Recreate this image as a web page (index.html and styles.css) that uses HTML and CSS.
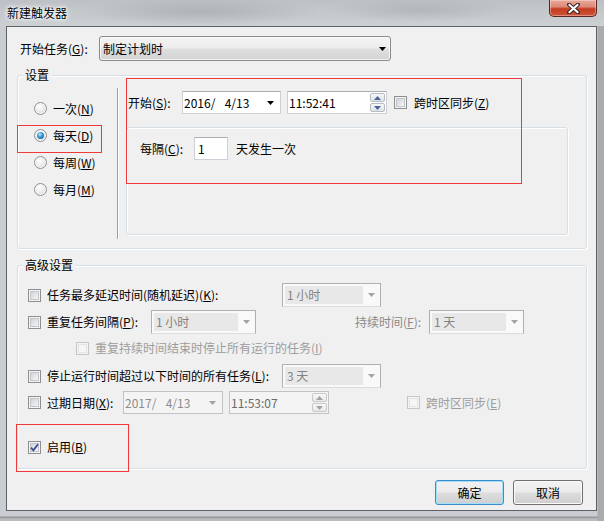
FILE: index.html
```html
<!DOCTYPE html>
<html lang="zh-CN">
<head>
<meta charset="utf-8">
<title>新建触发器</title>
<link rel="stylesheet" href="styles.css">
</head>
<body>
<div class="window">
  <div class="titlebar">
    <span class="title">新建触发器</span>
    <div class="close">
      <svg width="13" height="11" viewBox="0 0 13 11"><path d="M2 1.5 L11 9.5 M11 1.5 L2 9.5" stroke="#3a2a28" stroke-width="4" stroke-linecap="round"/><path d="M2.3 1.8 L10.7 9.2 M10.7 1.8 L2.3 9.2" stroke="#fff" stroke-width="2" stroke-linecap="round"/></svg>
    </div>
  </div>
  <div class="client">
    <div class="row-task">
      <span class="lbl-task">开始任务(<u>G</u>):</span>
      <div class="combo-btn"><span>制定计划时</span><svg class="tri" width="7" height="4" viewBox="0 0 7 4"><path d="M0 0H7L3.5 4Z" fill="#000"/></svg></div>
    </div>

    <div class="group g-settings">
      <span class="group-title">设置</span>
      <div class="settings-body">
        <div class="radios">
          <div class="radio-row"><span class="radio"></span><span>一次(<u>N</u>)</span></div>
          <div class="radio-row"><span class="radio on"></span><span>每天(<u>D</u>)</span></div>
          <div class="radio-row"><span class="radio"></span><span>每周(<u>W</u>)</span></div>
          <div class="radio-row"><span class="radio"></span><span>每月(<u>M</u>)</span></div>
        </div>
        <div class="vsep"></div>
        <div class="settings-right">
          <div class="start-row">
            <span class="lbl-start">开始(<u>S</u>):</span>
            <div class="field date"><span>2016/ &#8199;4/13</span><svg class="tri" width="7" height="4" viewBox="0 0 7 4"><path d="M0 0H7L3.5 4Z" fill="#000"/></svg></div>
            <div class="field time"><span>11:52:41</span>
              <div class="spin">
                <span class="spin-btn"><svg width="7" height="4" viewBox="0 0 7 4"><path d="M0 4H7L3.5 0Z" fill="#4c6394"/></svg></span>
                <span class="spin-btn"><svg width="7" height="4" viewBox="0 0 7 4"><path d="M0 0H7L3.5 4Z" fill="#4c6394"/></svg></span>
              </div>
            </div>
            <span class="cb cb-sync"></span><span class="sync-text">跨时区同步(<u>Z</u>)</span>
          </div>
          <div class="inner-box">
            <div class="every-row">
              <span class="lbl-every">每隔(<u>C</u>):</span>
              <div class="field num">1</div>
              <span class="every-text">天发生一次</span>
            </div>
          </div>
        </div>
      </div>
    </div>

    <div class="group g-adv">
      <span class="group-title">高级设置</span>
      <div class="adv-rows">
        <div class="arow r-k">
          <span class="cb"></span><span class="lbl-long">任务最多延迟时间(随机延迟)(<u>K</u>):</span>
          <div class="dcombo w99"><span class="dtext">1 小时</span><span class="darrow"><svg width="7" height="4" viewBox="0 0 7 4"><path d="M0 0H7L3.5 4Z" fill="#a3a3a3"/></svg></span></div>
        </div>
        <div class="arow r-p">
          <span class="cb"></span><span class="lbl-rep">重复任务间隔(<u>P</u>):</span>
          <div class="dcombo w105"><span class="dtext">1 小时</span><span class="darrow"><svg width="7" height="4" viewBox="0 0 7 4"><path d="M0 0H7L3.5 4Z" fill="#a3a3a3"/></svg></span></div>
          <span class="lbl-dur">持续时间(<u>F</u>):</span>
          <div class="dcombo w95"><span class="dtext">1 天</span><span class="darrow"><svg width="7" height="4" viewBox="0 0 7 4"><path d="M0 0H7L3.5 4Z" fill="#a3a3a3"/></svg></span></div>
        </div>
        <div class="arow r-i">
          <span class="cb dis"></span><span class="dis-text">重复持续时间结束时停止所有运行的任务(<u>I</u>)</span>
        </div>
        <div class="arow r-l">
          <span class="cb"></span><span class="lbl-long">停止运行时间超过以下时间的所有任务(<u>L</u>):</span>
          <div class="dcombo w99"><span class="dtext">3 天</span><span class="darrow"><svg width="7" height="4" viewBox="0 0 7 4"><path d="M0 0H7L3.5 4Z" fill="#a3a3a3"/></svg></span></div>
        </div>
        <div class="arow r-x">
          <span class="cb"></span><span class="lbl-exp">过期日期(<u>X</u>):</span>
          <div class="field dfield ddate"><span>2017/ &#8199;4/13</span><svg class="tri" width="7" height="4" viewBox="0 0 7 4"><path d="M0 0H7L3.5 4Z" fill="#a3a3a3"/></svg></div>
          <div class="field dfield dtime"><span>11:53:07</span>
            <div class="spin">
              <span class="spin-btn dspin"><svg width="7" height="4" viewBox="0 0 7 4"><path d="M0 4H7L3.5 0Z" fill="#a3a3a3"/></svg></span>
              <span class="spin-btn dspin"><svg width="7" height="4" viewBox="0 0 7 4"><path d="M0 0H7L3.5 4Z" fill="#a3a3a3"/></svg></span>
            </div>
          </div>
          <span class="cb dis cb-esync"></span><span class="dis-text">跨时区同步(<u>E</u>)</span>
        </div>
        <div class="arow r-b">
          <span class="cb checked"><svg width="9" height="9" viewBox="0 0 9 9"><path d="M1 4.6 L3.4 7.4 L8 1.2" stroke="#3a4f91" stroke-width="1.8" fill="none"/></svg></span><span>启用(<u>B</u>)</span>
        </div>
      </div>
    </div>

    <div class="buttons">
      <button class="btn btn-ok">确定</button>
      <button class="btn btn-cancel">取消</button>
    </div>

    <div class="mark mark-day"></div>
    <div class="mark mark-start"></div>
    <div class="mark mark-enable"></div>
  </div>
</div>
</body>
</html>
```

FILE: styles.css
```css
* { box-sizing: border-box; }
html, body { margin: 0; padding: 0; }
body {
  font-family: "Noto Sans CJK SC", "Noto Sans", sans-serif;
  font-size: 12px;
  line-height: 16px;
  color: #000;
  background: #c7cacd;
}
u { text-decoration-thickness: 1px; text-underline-offset: 1px; }

.window {
  width: 604px;
  height: 521px;
  display: flex;
  flex-direction: column;
  background:
    linear-gradient(to right, transparent 0, transparent 597px, #a9abad 598px),
    linear-gradient(to bottom, #c9ccd0 0, #c9ccd0 516px, #8f9194 517px, #b9bbbd 519px);
  overflow: hidden;
}

/* title bar */
.titlebar {
  height: 26px;
  flex: none;
  display: flex;
  align-items: flex-start;
  background:
    radial-gradient(ellipse 120px 14px at 200px 12px, rgba(150,154,158,0.45), transparent),
    radial-gradient(ellipse 90px 12px at 420px 10px, rgba(150,154,158,0.35), transparent),
    linear-gradient(to bottom, #bdc1c5, #cdd0d3);
}
.title {
  padding: 5px 0 0 7px;
  color: #000;
  text-shadow: 0 0 6px #fff, 0 0 4px #fff, 0 0 2px #fff;
}
.close {
  margin-left: auto;
  margin-right: 7px;
  width: 48px;
  height: 17px;
  border: 1px solid #5b2620;
  border-top: 0;
  border-radius: 0 0 5px 5px;
  background: linear-gradient(to bottom, #e9a79a 0%, #de8a78 42%, #c33c22 55%, #cf5538 100%);
  box-shadow: inset 0 0 0 1px rgba(255,255,255,0.35);
  display: flex;
  align-items: center;
  justify-content: center;
}

/* client area */
.client {
  position: relative;
  margin-left: 6px;
  width: 591px;
  height: 485px;
  flex: none;
  border: 1px solid #5d6166;
  background: #f0f0f0;
  padding-top: 9px;
}

.row-task {
  display: flex;
  align-items: center;
  height: 25px;
  padding-left: 13px;
}
.lbl-task { width: 79px; }
.combo-btn {
  width: 292px;
  height: 25px;
  border: 1px solid #8a8a8a;
  border-radius: 3px;
  background: linear-gradient(to bottom, #f4f4f4 0%, #ececec 48%, #dfdfdf 52%, #d3d3d3 100%);
  box-shadow: inset 0 0 0 1px rgba(255,255,255,0.7);
  display: flex;
  align-items: center;
  justify-content: space-between;
  padding: 0 4px 0 3px;
}

/* group boxes */
.group {
  margin-left: 10px;
  width: 570px;
  border: 1px solid #d5dfe5;
  border-radius: 3px;
  box-shadow: inset 1px 1px 0 #fff, 1px 1px 0 #fff;
}
.group-title {
  display: block;
  width: max-content;
  margin: -9px 0 0 5px;
  padding: 0 2px;
  background: #f0f0f0;
  line-height: 16px;
}
.g-settings { margin-top: 14px; height: 174px; }
.g-adv { margin-top: 16px; height: 204px; }

.settings-body { display: flex; }
.radios { width: 99px; padding: 12px 0 0 16px; }
.radio-row {
  height: 27px;
  display: flex;
  align-items: center;
  gap: 6px;
}
.radio {
  position: relative;
  flex: none;
  width: 13px;
  height: 13px;
  border-radius: 50%;
  border: 1px solid #8d9095;
  background: radial-gradient(circle at 40% 35%, #ffffff 0, #ececec 45%, #cfd1d4 100%);
  box-shadow: inset 0 0 0 1px #f7f7f7;
}
.radio.on::after {
  content: "";
  position: absolute;
  left: 2px;
  top: 2px;
  width: 7px;
  height: 7px;
  border-radius: 50%;
  background: radial-gradient(circle at 40% 35%, #bdeeff 0, #3c9bd7 40%, #0d4c82 100%);
}
.vsep {
  margin-top: 5px;
  width: 2px;
  height: 151px;
  border-left: 1px solid #a0a0a0;
  border-right: 1px solid #ffffff;
}
.settings-right { padding: 8px 0 0 7px; }
.start-row { display: flex; align-items: center; height: 23px; }
.lbl-start { width: 56px; padding-left: 2px; }

.field {
  height: 23px;
  border: 1px solid #cdd1d7;
  border-top-color: #abadb3;
  background: #fff;
  display: flex;
  align-items: center;
  flex: none;
}
.date { width: 99px; padding: 0 6px 0 1px; justify-content: space-between; }
.time { width: 100px; margin-left: 6px; padding-left: 1px; }
.spin {
  margin-left: auto;
  margin-right: 1px;
  display: flex;
  flex-direction: column;
  gap: 1px;
}
.spin-btn {
  width: 15px;
  height: 9px;
  border: 1px solid #b7bcc4;
  border-radius: 2px;
  background: linear-gradient(to bottom, #f6f7f9, #dde2e8);
  display: flex;
  align-items: center;
  justify-content: center;
}
.cb-sync { margin-left: 7px; }
.sync-text { margin-left: 7px; }

.inner-box {
  margin-top: 13px;
  width: 442px;
  height: 108px;
  border: 1px solid #d5dfe5;
  border-radius: 3px;
  box-shadow: inset 1px 1px 0 #fff, 1px 1px 0 #fff;
  padding: 9px 0 0 13px;
}
.every-row { display: flex; align-items: center; height: 23px; }
.lbl-every { width: 54px; }
.num { width: 34px; padding-left: 3px; }
.every-text { margin-left: 8px; }

/* checkboxes */
.cb {
  position: relative;
  flex: none;
  width: 13px;
  height: 13px;
  border: 1px solid #8e8f8f;
  background: #f4f4f4;
}
.cb::after {
  content: "";
  position: absolute;
  left: 1px; top: 1px; right: 1px; bottom: 1px;
  border: 1px solid #c2c6cc;
  background: linear-gradient(135deg, #d0d3d8 0%, #f6f6f6 100%);
}
.cb.dis { border-color: #c6c6c6; }
.cb.dis::after { border-color: #e4e4e4; background: #f6f6f6; }
.cb.checked { display: flex; align-items: center; justify-content: center; }
.cb.checked::after { z-index: 0; }
.cb.checked svg { position: relative; z-index: 1; }

/* advanced */
.adv-rows { padding-left: 10px; }
.arow { display: flex; align-items: center; }
.arow > .cb + span { margin-left: 6px; }
.r-k { margin-top: 10px; height: 24px; }
.r-p { margin-top: 3px; height: 24px; }
.r-i { height: 28px; padding-left: 48px; }
.r-l { margin-top: 2px; height: 24px; }
.r-x { margin-top: 3px; height: 23px; }
.r-b { margin-top: 23px; height: 20px; }
.lbl-long { width: 235px; }
.lbl-rep { width: 104px; }
.lbl-dur { width: 74px; margin-left: 99px; color: #8a8a8a; }
.lbl-exp { width: 76px; }
.dis-text { color: #9d9d9d; }

.dcombo {
  height: 24px;
  flex: none;
  border: 1px solid #b0b0b0;
  border-bottom-color: #dcdcdc;
  background: #f9f9f9;
  display: flex;
  align-items: stretch;
  padding: 2px 0 2px 2px;
  color: #838383;
}
.dtext { flex: 1; background: #e8e8e8; padding-left: 2px; line-height: 18px; }
.darrow { width: 17px; display: flex; align-items: center; justify-content: center; }
.w99 { width: 99px; }
.w105 { width: 105px; }
.w95 { width: 95px; }

.dfield { border-color: #c3c3c3; background: #f4f4f4; }
.ddate { width: 100px; padding: 0 6px 0 1px; justify-content: space-between; color: #8d8d8d; }
.dtime { width: 100px; margin-left: 6px; padding-left: 1px; color: #6a6a6a; }
.dspin { border-color: #c8c8c8; background: linear-gradient(to bottom, #f8f8f8, #e8e8e8); }
.cb-esync { margin-left: 78px; }

/* buttons */
.buttons {
  margin-top: 11px;
  display: flex;
  justify-content: flex-end;
  gap: 9px;
  padding-right: 13px;
}
.btn {
  height: 25px;
  font: inherit;
  color: #000;
  border: 1px solid #707070;
  border-radius: 3px;
  background: linear-gradient(to bottom, #f2f2f2 0%, #ebebeb 48%, #dddddd 52%, #cfcfcf 100%);
  box-shadow: inset 0 0 0 1px #fbfbfb;
  padding: 0;
}
.btn-ok {
  width: 69px;
  border-color: #3c8ccc;
  box-shadow: inset 0 0 0 1px #9fe0f8;
}
.btn-cancel { width: 70px; }

/* red annotation boxes */
.mark {
  position: absolute;
  border: 1px solid #f03a3a;
  pointer-events: none;
}
.mark-day { left: 10px; top: 98px; width: 85px; height: 28px; }
.mark-start { left: 119px; top: 51px; width: 396px; height: 106px; }
.mark-enable { left: 9px; top: 397px; width: 113px; height: 48px; }
```
